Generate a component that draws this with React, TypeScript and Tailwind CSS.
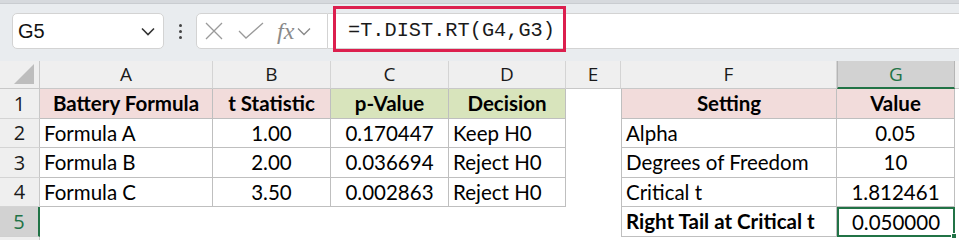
import React from "react";

function ColHead({ label, selected }: { label: string; selected?: boolean }) {
  return (
    <div
      className={
        selected
          ? "flex items-center justify-center bg-[#d2d2d2] text-[#217346] border-b-2 border-b-[#217346] border-r border-r-[#b5b5b5] border-l border-l-[#b5b5b5] text-[19px]"
          : "flex items-center justify-center bg-[#efefef] text-[#1a1a1a] border-b border-b-[#c8c8c8] border-r border-r-[#d4d4d4] text-[19px]"
      }
      style={{ fontFamily: '"Open Sans", "Liberation Sans", sans-serif' }}
    >
      {label}
    </div>
  );
}

function RowHead({ label, selected }: { label: string; selected?: boolean }) {
  return (
    <div
      className={
        selected
          ? "flex items-center justify-center bg-[#d2d2d2] text-[#217346] border-r-2 border-r-[#217346] border-b border-b-[#d0d0d0] text-[20px]"
          : "flex items-center justify-center bg-[#efefef] text-[#1a1a1a] border-r border-r-[#c8c8c8] border-b border-b-[#d4d4d4] text-[20px]"
      }
      style={{ fontFamily: '"Open Sans", "Liberation Sans", sans-serif' }}
    >
      {label}
    </div>
  );
}

function Cell({
  children,
  className = "",
}: {
  children?: React.ReactNode;
  className?: string;
}) {
  return (
    <div
      className={"flex items-center text-[20.5px] text-black whitespace-nowrap overflow-visible " + className}
    >
      {children}
    </div>
  );
}

export default function App() {
  const cellFont = { fontFamily: 'Lato, "Open Sans", sans-serif' };
  return (
    <div className="relative w-[959px] h-[240px] overflow-hidden bg-[#e9ecef]">
      {/* top strip */}
      <div className="h-[4px] bg-[#d6d9dd] border-b border-b-[#c9ccd0]" />

      {/* formula bar */}
      <div className="h-[57px] flex items-start pt-[9px]">
        {/* name box */}
        <div className="ml-[12px] w-[152px] h-[36px] bg-white border border-[#d3d3d3] rounded-[5px] flex items-center justify-between pl-[5px] pr-[8px]">
          <span
            className="text-[20px] text-[#111]"
            style={{ fontFamily: '"Liberation Sans", Arial, sans-serif' }}
          >
            G5
          </span>
          <svg width="14" height="9" viewBox="0 0 14 9">
            <path d="M1 1.5 L7 7.5 L13 1.5" fill="none" stroke="#333" strokeWidth="1.6" />
          </svg>
        </div>
        {/* dots */}
        <div className="w-[32px] h-[36px] flex flex-col items-center justify-center gap-[3px]">
          <div className="w-[3px] h-[3px] rounded-full bg-[#444]" />
          <div className="w-[3px] h-[3px] rounded-full bg-[#444]" />
          <div className="w-[3px] h-[3px] rounded-full bg-[#444]" />
        </div>
        {/* fx box */}
        <div className="w-[132px] h-[36px] bg-white border border-[#d3d3d3] rounded-l-[5px] flex items-center pl-[8px]">
          <svg width="18" height="18" viewBox="0 0 18 18">
            <path d="M1 1 L17 17 M17 1 L1 17" stroke="#9a9a9a" strokeWidth="1.3" fill="none" />
          </svg>
          <svg width="26" height="18" viewBox="0 0 26 18" className="ml-[15px]">
            <path d="M1 9 L8 16 L25 1" stroke="#9a9a9a" strokeWidth="1.3" fill="none" />
          </svg>
          <span
            className="ml-[13px] text-[24px] italic text-[#8a8a8a] leading-none"
            style={{ fontFamily: '"Liberation Serif", "Times New Roman", serif' }}
          >
            fx
          </span>
          <svg width="14" height="9" viewBox="0 0 14 9" className="ml-[3px]">
            <path d="M1 1.5 L7 7.5 L13 1.5" fill="none" stroke="#8a8a8a" strokeWidth="1.4" />
          </svg>
        </div>
        {/* formula input */}
        <div className="flex-1 h-[36px] bg-white border-y border-[#d3d3d3] flex items-center pl-[20px]">
          <span
            className="text-[20.3px] text-[#1a1a1a]"
            style={{ fontFamily: '"Liberation Mono", "DejaVu Sans Mono", monospace' }}
          >
            =T.DIST.RT(G4,G3)
          </span>
        </div>
      </div>

      {/* red highlight */}
      <div className="absolute left-[333px] top-[6px] w-[233px] h-[46px] border-[3px] border-[#dc1f4e]" />

      {/* grid */}
      <div
        className="grid grid-cols-[40px_173px_118px_118px_117px_55px_216px_118px_1fr] grid-rows-[28px_30px_29px_30px_29px_30px_1fr] h-[179px] bg-white"
        style={cellFont}
      >
        {/* header row */}
        <div className="bg-[#efefef] border-r border-r-[#c8c8c8] border-b border-b-[#c8c8c8] flex items-end justify-end pr-[5px] pb-[4px]">
          <svg width="20" height="20" viewBox="0 0 20 20">
            <path d="M20 0 L20 20 L0 20 Z" fill="#bdbdbd" />
          </svg>
        </div>
        <ColHead label="A" />
        <ColHead label="B" />
        <ColHead label="C" />
        <ColHead label="D" />
        <ColHead label="E" />
        <ColHead label="F" />
        <ColHead label="G" selected />
        <div className="bg-[#efefef] border-b border-b-[#c8c8c8]" />

        {/* row 1 */}
        <RowHead label="1" />
        <Cell className="justify-center font-bold bg-[#f2dcdb] border-r border-b border-[#bfbfbf]">Battery Formula</Cell>
        <Cell className="justify-center font-bold bg-[#f2dcdb] border-r border-b border-[#bfbfbf]">t Statistic</Cell>
        <Cell className="justify-center font-bold bg-[#d8e4bc] border-r border-b border-[#bfbfbf]">p-Value</Cell>
        <Cell className="justify-center font-bold bg-[#d8e4bc] border-r border-b border-[#bfbfbf]">Decision</Cell>
        <Cell />
        <Cell className="justify-center font-bold bg-[#f2dcdb] border-l border-r border-b border-[#bfbfbf]">Setting</Cell>
        <Cell className="justify-center font-bold bg-[#f2dcdb] border-r border-b border-[#bfbfbf]">Value</Cell>
        <Cell />

        {/* row 2 */}
        <RowHead label="2" />
        <Cell className="pl-[4px] border-r border-b border-[#bfbfbf]">Formula A</Cell>
        <Cell className="justify-center border-r border-b border-[#bfbfbf]">1.00</Cell>
        <Cell className="justify-center border-r border-b border-[#bfbfbf]">0.170447</Cell>
        <Cell className="pl-[4px] border-r border-b border-[#bfbfbf]">Keep H0</Cell>
        <Cell />
        <Cell className="pl-[4px] border-l border-r border-b border-[#bfbfbf]">Alpha</Cell>
        <Cell className="justify-center border-r border-b border-[#bfbfbf]">0.05</Cell>
        <Cell />

        {/* row 3 */}
        <RowHead label="3" />
        <Cell className="pl-[4px] border-r border-b border-[#bfbfbf]">Formula B</Cell>
        <Cell className="justify-center border-r border-b border-[#bfbfbf]">2.00</Cell>
        <Cell className="justify-center border-r border-b border-[#bfbfbf]">0.036694</Cell>
        <Cell className="pl-[4px] border-r border-b border-[#bfbfbf]">Reject H0</Cell>
        <Cell />
        <Cell className="pl-[4px] border-l border-r border-b border-[#bfbfbf]">Degrees of Freedom</Cell>
        <Cell className="justify-center border-r border-b border-[#bfbfbf]">10</Cell>
        <Cell />

        {/* row 4 */}
        <RowHead label="4" />
        <Cell className="pl-[4px] border-r border-b border-[#bfbfbf]">Formula C</Cell>
        <Cell className="justify-center border-r border-b border-[#bfbfbf]">3.50</Cell>
        <Cell className="justify-center border-r border-b border-[#bfbfbf]">0.002863</Cell>
        <Cell className="pl-[4px] border-r border-b border-[#bfbfbf]">Reject H0</Cell>
        <Cell />
        <Cell className="pl-[4px] border-l border-r border-b border-[#bfbfbf]">Critical t</Cell>
        <Cell className="justify-center border-r border-b border-[#bfbfbf]">1.812461</Cell>
        <Cell />

        {/* row 5 */}
        <RowHead label="5" selected />
        <Cell />
        <Cell />
        <Cell />
        <Cell />
        <Cell />
        <Cell className="pl-[4px] font-bold border-l border-r border-b border-[#bfbfbf]">Right Tail at Critical t</Cell>
        <Cell className="relative justify-center border-2 border-[#217346]">
          0.050000
          <div className="absolute right-[-4px] bottom-[-4px] w-[6px] h-[6px] bg-[#217346] border border-white" />
        </Cell>
        <Cell />

        {/* remaining */}
        <div className="bg-[#efefef] border-r border-r-[#c8c8c8]" />
        <div />
        <div />
        <div />
        <div />
        <div />
        <div />
        <div />
        <div />
      </div>
    </div>
  );
}
